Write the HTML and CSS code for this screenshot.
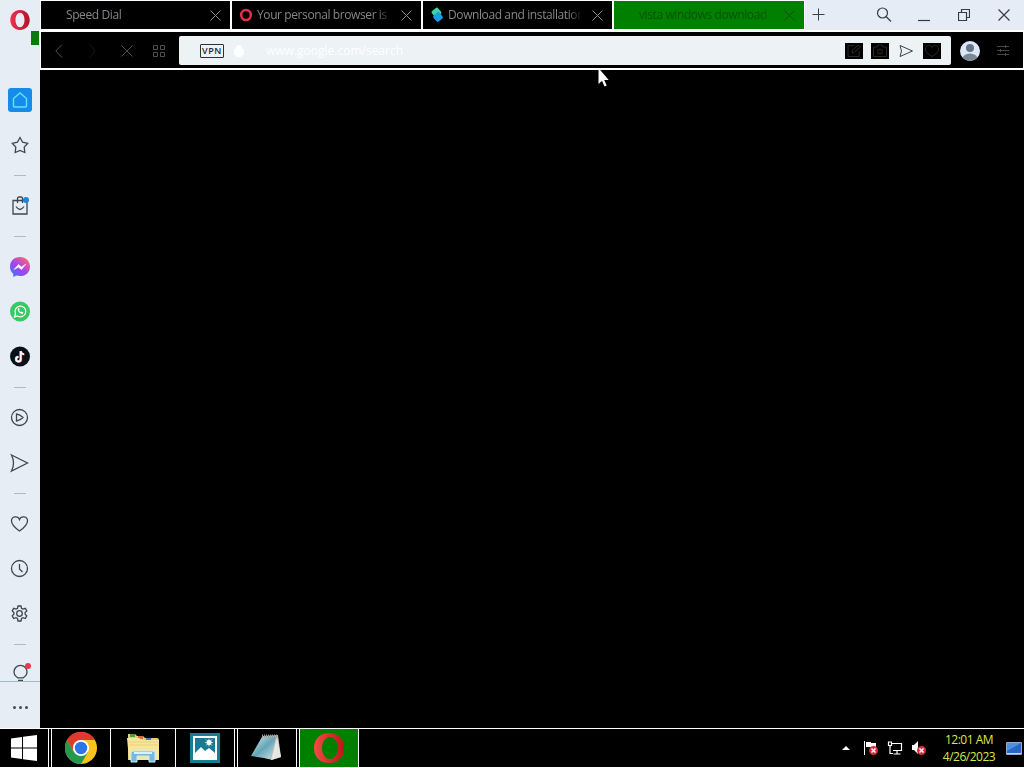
FILE: index.html
```html
<!DOCTYPE html>
<html lang="en">
<head>
    <meta charset="UTF-8">
    <meta name="viewport" content="width=device-width, initial-scale=1.0">
    <title>Opera</title>
    <link rel="stylesheet" href="styles.css">
</head>
<body>
    <div class="screen">
        <div class="window">
            <div class="sidebar">
                <div class="logo">
                    <svg width="20" height="20" viewBox="0 0 20 20"><defs><linearGradient id="o"><stop offset="0" stop-color="#f0304c"/><stop offset="1" stop-color="#b3122c"/></linearGradient></defs><path d="M10 0C4.500 0 .3 4.300.3 10s4.200 10 9.700 10 9.700-4.300 9.700-10S15.500 0 10 0zm0 2.800c2.700 0 4.500 3.200 4.500 7.200s-1.800 7.200-4.500 7.200S5.500 14 5.500 10 7.300 2.800 10 2.800z" fill="url(#o)" stroke="none"/></svg>
                </div>
                <div class="marker"></div>
                <div class="item home">
                    <svg width="24" height="24" viewBox="0 0 24 24"><path d="M5.500 10.500 12 5l6.500 5.500V18q0 1-1 1h-11q-1 0-1-1z" stroke="#5fe4ff" stroke-width="1.4"/></svg>
                </div>
                <div class="item">
                    <svg width="24" height="24" viewBox="0 0 24 24"><path d="m12 4.500 2.600 4.700 5.100 1.100-3.500 3.800.6 5.400-4.800-2.100-4.800 2.100.6-5.400-3.500-3.800 5.100-1.100z"/></svg>
                </div>
                <div class="divider"></div>
                <div class="item">
                    <svg width="24" height="24" viewBox="0 0 24 24"><path d="M5 6.500h14V20H5zM9.500 9V4.500Q9.500 3 11 3h2q1.500 0 1.500 1.500V9M8 12.500q4 6 8 0"/><circle cx="18" cy="6" r="3" fill="#1a86dd" stroke="none"/></svg>
                </div>
                <div class="divider"></div>
                <div class="item">
                    <svg width="24" height="24" viewBox="0 0 24 24"><defs><linearGradient id="msg" x1="0" y1="1" x2=".8" y2="0"><stop offset="0" stop-color="#2d7bff"/><stop offset=".5" stop-color="#a044f2"/><stop offset="1" stop-color="#ff6573"/></linearGradient></defs><path d="M12 2C6 2 2 6.200 2 11.700c0 3 1.200 5.500 3.300 7.300V22l3-1.400c1.200.3 2.400.5 3.700.5 6 0 10-4.100 10-9.400S18 2 12 2z" fill="url(#msg)" stroke="none"/><path d="m6 14.500 4.500-5 3 2.500L18 9l-4.500 5.500-3-2.300z" fill="#fff" stroke="#fff" stroke-width=".5"/></svg>
                </div>
                <div class="item">
                    <svg width="24" height="24" viewBox="0 0 24 24"><circle cx="12" cy="11.500" r="10" fill="#35ca64" stroke="none"/><path d="m6.500 17 1-3.300a5.400 5.400 0 1 1 2 2.300z" stroke="#fff" stroke-width="1.300"/><path d="M9.700 8.500c-.3 3 2.500 5.700 5.200 5.200l.5-1.300-1.700-.9-.8.8c-1-.5-1.500-1.100-1.900-2l.7-.7-.7-1.600z" fill="#fff" stroke="none"/></svg>
                </div>
                <div class="item">
                    <svg width="24" height="24" viewBox="0 0 24 24"><circle cx="12" cy="11.500" r="10" fill="#0b1118" stroke="none"/><path d="M12.300 6v8a2.300 2.300 0 1 1-2.300-2.300M12.300 6c.2 2 1.500 3 3.300 3.200" stroke="#36e5e0" stroke-width="1.800"/><path d="M13.300 6.500v8A2.300 2.300 0 1 1 11 12.200M13.300 6.500c.2 2 1.500 3 3.300 3.200" stroke="#f23355" stroke-width="1.800"/><path d="M12.800 6.200v8a2.300 2.300 0 1 1-2.300-2.300M12.800 6.200c.2 2 1.500 3 3.300 3.200" stroke="#fff" stroke-width="1.800"/></svg>
                </div>
                <div class="divider"></div>
                <div class="item">
                    <svg width="24" height="24" viewBox="0 0 24 24"><circle cx="11.500" cy="11.500" r="8"/><path d="M8.500 8v7q3.500-.5 6.500-3.500-3-3-6.500-3.500z"/></svg>
                </div>
                <div class="item">
                    <svg width="24" height="24" viewBox="0 0 24 24"><path d="m3.500 4 16 8-16 8q4-8 0-16z"/></svg>
                </div>
                <div class="divider"></div>
                <div class="item">
                    <svg width="24" height="24" viewBox="0 0 24 24"><path d="M11.500 19C6.500 15.500 3.500 12.500 3.500 9c0-5 6.500-5.500 8-1.500C13 3.500 19.500 4 19.500 9c0 3.500-3 6.500-8 10z"/></svg>
                </div>
                <div class="item">
                    <svg width="24" height="24" viewBox="0 0 24 24"><circle cx="11.500" cy="11.500" r="8"/><path d="M11.500 7v5l3 3"/></svg>
                </div>
                <div class="item">
                    <svg width="24" height="24" viewBox="0 0 24 24"><circle cx="11.500" cy="11.500" r="2.800"/><path d="m10 4h3l.5 2.300 1.500.8 2.300-.8 1.500 2.600-1.700 1.600v1.800l1.700 1.600-1.500 2.600-2.300-.8-1.500.8L13 19h-3l-.5-2.500-1.500-.8-2.300.8-1.500-2.600 1.700-1.600v-1.800L4.200 8.900l1.500-2.600 2.300.8 1.500-.8z"/></svg>
                </div>
                <div class="divider"></div>
                <div class="item bulb">
                    <svg width="24" height="19" viewBox="0 0 24 19"><path d="M10 14.800q-4-2-4-6a6.500 6.500 0 0 1 13 0q0 4-4 6zM10 17.300h5"/><circle cx="20" cy="3" r="3" fill="#e83a4e" stroke="none"/></svg>
                </div>
                <div class="more"><i></i><i></i><i></i></div>
            </div>

            <div class="browser">
                <div class="tabbar">
                    <div class="tab">
                        <span class="icon"></span>
                        <span class="title">Speed Dial</span>
                        <svg class="close" width="11" height="11" viewBox="0 0 11 11"><path d="m.5.5 10 10m0-10-10 10"/></svg>
                    </div>
                    <div class="tab">
                        <span class="icon"><svg width="14" height="14" viewBox="0 0 14 14"><ellipse cx="7" cy="7" rx="4.800" ry="5" fill="none" stroke="#e5304c" stroke-width="2.500"/></svg></span>
                        <span class="title">Your personal browser is</span>
                        <svg class="close" width="11" height="11" viewBox="0 0 11 11"><path d="m.5.5 10 10m0-10-10 10"/></svg>
                    </div>
                    <div class="tab">
                        <span class="icon"><svg width="14" height="16" viewBox="0 0 14 16"><rect x="2.500" y="1.500" width="8" height="8" rx="2" transform="rotate(-40 6.500 5.500)" fill="#3dd6a0"/><rect x="4" y="6" width="8" height="8" rx="2" transform="rotate(-40 8 10)" fill="#1c9be6"/></svg></span>
                        <span class="title">Download and installation</span>
                        <svg class="close" width="11" height="11" viewBox="0 0 11 11"><path d="m.5.5 10 10m0-10-10 10"/></svg>
                    </div>
                    <div class="tab active">
                        <span class="icon"></span>
                        <span class="title">vista windows download</span>
                        <svg class="close" width="11" height="11" viewBox="0 0 11 11"><path d="m.5.5 10 10m0-10-10 10"/></svg>
                    </div>
                    <svg class="newtab" width="13" height="13" viewBox="0 0 13 13"><path d="M6.500.5v12M.5 6.500h12"/></svg>
                    <div class="controls">
                        <svg class="search" width="16" height="16" viewBox="0 0 16 16"><circle cx="6.500" cy="6" r="5"/><path d="m10 9.500 5 5"/></svg>
                        <svg width="12" height="16" viewBox="0 0 12 16"><path d="M0 13.500h12"/></svg>
                        <svg width="12" height="12" viewBox="0 0 12 12"><path d="M.5 3.500h8v8h-8zM3.500 3.500v-3h8v8h-3"/></svg>
                        <svg width="12" height="12" viewBox="0 0 12 12"><path d="m.5.5 11 11m0-11-11 11"/></svg>
                    </div>
                </div>

                <div class="toolbar">
                    <div class="nav">
                        <svg width="8" height="14" viewBox="0 0 8 14"><path d="M7 .5.8 7 7 13.500"/></svg>
                        <svg class="off" width="8" height="14" viewBox="0 0 8 14"><path d="m1 .5 5 6.500-5 6.500"/></svg>
                        <svg width="12" height="12" viewBox="0 0 12 12"><path d="m.5.5 11 11m0-11-11 11"/></svg>
                        <svg width="14" height="12" viewBox="0 0 14 12"><path d="M1.500.5h4v4h-4zM8.500.5h4v4h-4zM1.500 7.500h4v4h-4zM8.500 7.500h4v4h-4z"/></svg>
                    </div>
                    <div class="address">
                        <span class="vpn">VPN</span>
                        <svg class="lock" width="10" height="12" viewBox="0 0 10 12"><path d="M0 4h2q0-4 3-4t3 4h2v5q-1 3-5 3t-5-3z"/></svg>
                        <span class="url">www.google.com/search</span>
                        <div class="actions">
                            <span class="chip"><svg width="18" height="16" viewBox="0 0 18 16"><path d="M9 2.500H3v11h11V8M7 10l.5-3 6-5 2 2-6 5z"/></svg></span>
                            <span class="chip"><svg width="18" height="16" viewBox="0 0 18 16"><path d="M2.500 4H6l1-2h4l1 2h3.500v9.500h-13z"/><circle cx="9" cy="8.500" r="2.500"/></svg></span>
                            <span class="send"><svg width="14" height="12" viewBox="0 0 14 12"><path d="m1 .5 12.500 5.500L1 11.500Q4 6 1 .5z"/></svg></span>
                            <span class="chip"><svg width="18" height="16" viewBox="0 0 18 16"><path d="M9 13.500C4.500 11 2.500 8.500 2.500 6c0-4.500 5.500-4.500 6.500-1.500C10 1.500 15.500 1.500 15.500 6c0 2.500-2 5-6.500 7.500z"/></svg></span>
                        </div>
                    </div>
                    <svg class="avatar" width="20" height="20" viewBox="0 0 20 20"><clipPath id="round"><circle cx="10" cy="10" r="10"/></clipPath><g clip-path="url(#round)"><rect width="20" height="20" fill="#dde7f5"/><circle cx="10" cy="7" r="4" fill="#63748b"/><ellipse cx="10" cy="18" rx="7.500" ry="5.500" fill="#7c8797"/></g></svg>
                    <svg class="menu" width="14" height="11" viewBox="0 0 14 11"><path d="M1 1.500h12M1 5.500h12M1 9.500h12M9.500 0v3M4.500 4v3M9.500 8v3"/></svg>
                </div>
                <div class="page"></div>
            </div>
        </div>

        <div class="taskbar">
            <div class="start">
                <svg width="26" height="26" viewBox="0 0 26 26"><path d="m0 3.500 11-1.500v10.500H0zM12 1.800 26 0v12.500H12zM0 13.500h11V24L0 22.500zM12 13.500h14V26l-14-1.800z" fill="#fff"/></svg>
            </div>
            <div class="app chrome">
                <svg width="32" height="32" viewBox="0 0 32 32"><circle cx="16" cy="16" r="16" fill="#fcc31e"/><path d="M2.100 8A16 16 0 0 0 16 32l7-12-7-4-7 4z" fill="#24994c"/><path d="M2.100 8A16 16 0 0 1 29.900 8H16a8 8 0 0 0-7 12z" fill="#df382d"/><circle cx="16" cy="16" r="8" fill="#fff"/><circle cx="16" cy="16" r="6.200" fill="#2d76e8"/></svg>
            </div>
            <div class="app explorer">
                <svg width="34" height="30" viewBox="0 0 34 30"><path d="M2 4V1h7l2 2h6l2 2h12q2 0 2 2v20H2z" fill="#e5cf6c"/><path d="M4 1h5v3H4z" fill="#4d9d51"/><path d="M12 3h5v3h-5z" fill="#db6942"/><path d="M20 5h5v3h-5z" fill="#4274cc"/><path d="M1 5h12l3 2h17v20H3z" fill="#f5e69b"/><path d="M3 9h29M3 12h29" stroke="#ebd078"/><path d="M5 29V20q0-2 3-2h18q3 0 3 2v9h-6v-6H11v6z" fill="#75b9df" stroke="#c9edf8"/><path d="M8 20h18" stroke="#d7f2fa" stroke-width="2"/></svg>
            </div>
            <div class="app photos">
                <svg width="30" height="30" viewBox="0 0 30 30"><path fill="#177e94" d="M0 0h30v30H0z"/><path fill="#fff" d="M3 3h24v24H3z"/><path fill="#167b94" d="M5 5h20v17H5z"/><path fill="#fff" d="m5 20 6-6 4 4 4-3 6 5v3H5z"/><circle cx="19" cy="9.500" r="2.500" fill="#fff"/><path d="M19 5.500v8m-4-4h8m-7-3 6 6m0-6-6 6" stroke="#fff" stroke-width=".7"/></svg>
            </div>
            <div class="app notepad">
                <svg width="32" height="28" viewBox="0 0 32 28"><defs><linearGradient id="pad" x1="0" y1="0" x2="1" y2="1"><stop offset="0" stop-color="#d8edf0"/><stop offset=".5" stop-color="#65a5b7"/><stop offset="1" stop-color="#c7e5ed"/></linearGradient></defs><path d="M11 2 27 1l3 22-9 3-7-2z" fill="#b9b9b5"/><path d="M11 3h14l-6 22L0 22z" fill="url(#pad)"/><path d="m26 3 4 20-10 3z" fill="#e6e6e2"/><path d="M11 2h16" stroke="#989790" stroke-width="3" stroke-dasharray="1 1"/></svg>
            </div>
            <div class="app opera">
                <svg width="32" height="30" viewBox="0 0 32 30"><defs><linearGradient id="ring"><stop offset="0" stop-color="#f34b43"/><stop offset="1" stop-color="#ba1719"/></linearGradient></defs><path d="M16 0C7 0 1 6 1 15s6 15 15 15 15-6 15-15S25 0 16 0zm1 4c4.500 0 8 5 8 11s-3.500 11-8 11-8-5-8-11 3.500-11 8-11z" fill="url(#ring)"/></svg>
            </div>
            <div class="tray">
                <svg width="8" height="4" viewBox="0 0 8 4"><path d="m0 4 4-4 4 4z" fill="#fff"/></svg>
                <svg class="flag" width="16" height="16" viewBox="0 0 16 16"><path d="M1.500 1v14" stroke="#fff"/><path d="M3 2h5v1h5v5H8V7H3z" fill="#fff"/><circle cx="10.500" cy="10.500" r="4.500" fill="#d92c3a"/><path d="m8.500 8.500 4 4m0-4-4 4" stroke="#fff" stroke-width="1.500"/></svg>
                <svg class="net" width="16" height="14" viewBox="0 0 16 14"><path d="M5 2.500h9.500v7H6M10 10v3M6.500 13h7M1.500 1h3v3.500h-3zM3 5v7.500h3" fill="none" stroke="#fff" stroke-width="1.200"/></svg>
                <svg class="sound" width="16" height="16" viewBox="0 0 16 16"><path d="M1 5h2l4-4v13l-4-4H1z" fill="#fff"/><circle cx="10.500" cy="10.500" r="4.500" fill="#d92c3a"/><path d="m8.500 8.500 4 4m0-4-4 4" stroke="#fff" stroke-width="1.500"/></svg>
                <div class="clock"><span>12:01 AM</span><span>4/26/2023</span></div>
                <svg width="16" height="13" viewBox="0 0 16 13"><path d="M.5.500h15v12H.5z" fill="#2867c4" stroke="#95a9c7"/><path d="M1 1h14L1 9z" fill="#4e91e4"/><path d="M1 11.500h14" stroke="#cbd6e5"/></svg>
            </div>
        </div>
        <svg class="cursor" width="11" height="19" viewBox="0 0 11 19"><path d="M.5 0v16l3.500-3.300L6.500 18.500l2.200-1-2.500-5.500h4.500z" fill="#fff"/></svg>
    </div>
</body>
</html>
```
FILE: styles.css
```css
* {
    box-sizing: border-box;
}

body {
    margin: 0;
    font-family: "Open Sans", "Noto Sans", sans-serif;
    background-color: #000;
}

svg {
    display: block;
    flex: none;
}

.screen {
    position: relative;
    display: flex;
    flex-direction: column;
    width: 1024px;
    height: 768px;
    overflow: hidden;
}

.window {
    display: flex;
    height: 728px;
}

.sidebar {
    width: 40px;
    height: 728px;
    background-color: #e6edf5;
}

.sidebar svg {
    fill: none;
    stroke: #40464f;
    stroke-width: 1.3;
}

.logo {
    padding: 10px 0 1px 10px;
}

.marker {
    width: 8px;
    height: 14px;
    margin: 0 0 32px 31px;
    background-color: #087c0b;
}

.item {
    height: 45px;
    padding: 11px 8px 10px;
}

.home svg {
    border-radius: 3px;
    background-color: #168bea;
}

.divider {
    height: 16px;
    padding: 8px 14px 7px;
}

.divider::before {
    content: "";
    display: block;
    height: 1px;
    background-color: #a9bccb;
}

.bulb {
    height: 30px;
    padding: 11px 8px 0;
    border-bottom: 1px solid #9fb9cc;
}

.more {
    display: flex;
    justify-content: center;
    gap: 3px;
    padding-top: 24px;
}

.more i {
    width: 3px;
    height: 3px;
    border-radius: 50%;
    background-color: #454a52;
}

.browser {
    flex: 1;
    display: flex;
    flex-direction: column;
}

.tabbar {
    display: flex;
    gap: 2px;
    height: 32px;
    padding: 1px 0 3px 1px;
    background-color: #e6ecf6;
    border-bottom: 2px solid #fff;
}

.tab {
    display: flex;
    align-items: center;
    width: 189px;
    height: 28px;
    padding: 0 9px 0 7px;
    background-color: #000;
    outline: 1px solid #fff;
    color: #85868a;
    font-size: 12px;
    letter-spacing: -0.4px;
}

.icon {
    width: 14px;
    margin-right: 4px;
}

.title {
    flex: 1;
    overflow: hidden;
    white-space: nowrap;
    margin-right: 10px;
    padding-bottom: 1px;
    mask-image: linear-gradient(to right, #000 90%, transparent);
}

.close {
    fill: none;
    stroke: #8f8f8f;
}

.active {
    width: 190px;
    background-color: #008000;
    color: #075207;
}

.active .close {
    stroke: #0b500b;
}

.newtab {
    margin: 7px 0 0 6px;
    stroke: #39414e;
}

.controls {
    display: flex;
    align-items: center;
    gap: 28px;
    height: 28px;
    margin: 0 14px 0 auto;
}

.controls svg {
    fill: none;
    stroke: #353c48;
    stroke-width: 1.2;
}

.controls .search {
    margin-right: -2px;
}

.toolbar {
    display: flex;
    align-items: center;
    height: 38px;
    padding: 1px 13px 0 0;
    background-color: #000;
    border: solid #fff;
    border-width: 0 1px 2px 1px;
}

.nav {
    display: flex;
    align-items: center;
    width: 138px;
    padding-left: 14px;
    gap: 19px;
}

.nav svg {
    fill: none;
    stroke: #505050;
}

.nav .off {
    margin: 0 5px 0 7px;
    stroke: #161616;
}

.address {
    display: flex;
    align-items: center;
    width: 772px;
    height: 29px;
    padding: 0 10px 0 21px;
    border-radius: 2px;
    background-color: #edf2f5;
}

.vpn {
    width: 24px;
    height: 14px;
    border: 1px solid #29323d;
    border-radius: 1px;
    color: #202a36;
    font-size: 9px;
    font-weight: 600;
    line-height: 12px;
    letter-spacing: 0.6px;
    text-align: center;
}

.lock {
    margin-left: 10px;
    fill: #fff;
}

.url {
    margin-left: 22px;
    color: #fff;
    font-size: 12px;
}

.actions {
    display: flex;
    align-items: center;
    gap: 8px;
    margin-left: auto;
}

.actions svg {
    fill: none;
    stroke: #2b2b2b;
}

.chip {
    background-color: #000;
}

.send {
    padding: 0 2px;
}

.actions .send svg {
    stroke: #3b424b;
}

.avatar {
    margin-left: 9px;
}

.menu {
    margin-left: auto;
    stroke: #4a4642;
}

.page {
    flex: 1;
    background-color: #000;
}

.taskbar {
    display: flex;
    height: 40px;
    border: solid #fff;
    border-width: 1px 0;
    background-color: #000;
}

.start {
    width: 49px;
    padding: 6px 0 0 11px;
    border-right: 1px solid #fff;
}

.app {
    display: flex;
    align-items: center;
    justify-content: center;
    width: 60px;
    border: solid #fff;
    border-width: 0 1px;
}

.chrome {
    margin-left: 2px;
}

.explorer {
    width: 64px;
    border-width: 0;
}

.notepad,
.opera {
    margin-left: 2px;
}

.opera {
    background-color: #008000;
}

.tray {
    display: flex;
    align-items: center;
    margin: 0 2px 0 auto;
}

.flag {
    margin-left: 13px;
}

.net {
    margin-left: 8px;
}

.sound {
    margin-left: 8px;
}

.clock {
    display: flex;
    flex-direction: column;
    width: 64px;
    margin: 0 5px 0 10px;
    color: #dbe64a;
    font-size: 12px;
    line-height: 17px;
    letter-spacing: -0.5px;
    text-align: center;
    white-space: nowrap;
}

.cursor {
    position: absolute;
    left: 598px;
    top: 68px;
}
```
